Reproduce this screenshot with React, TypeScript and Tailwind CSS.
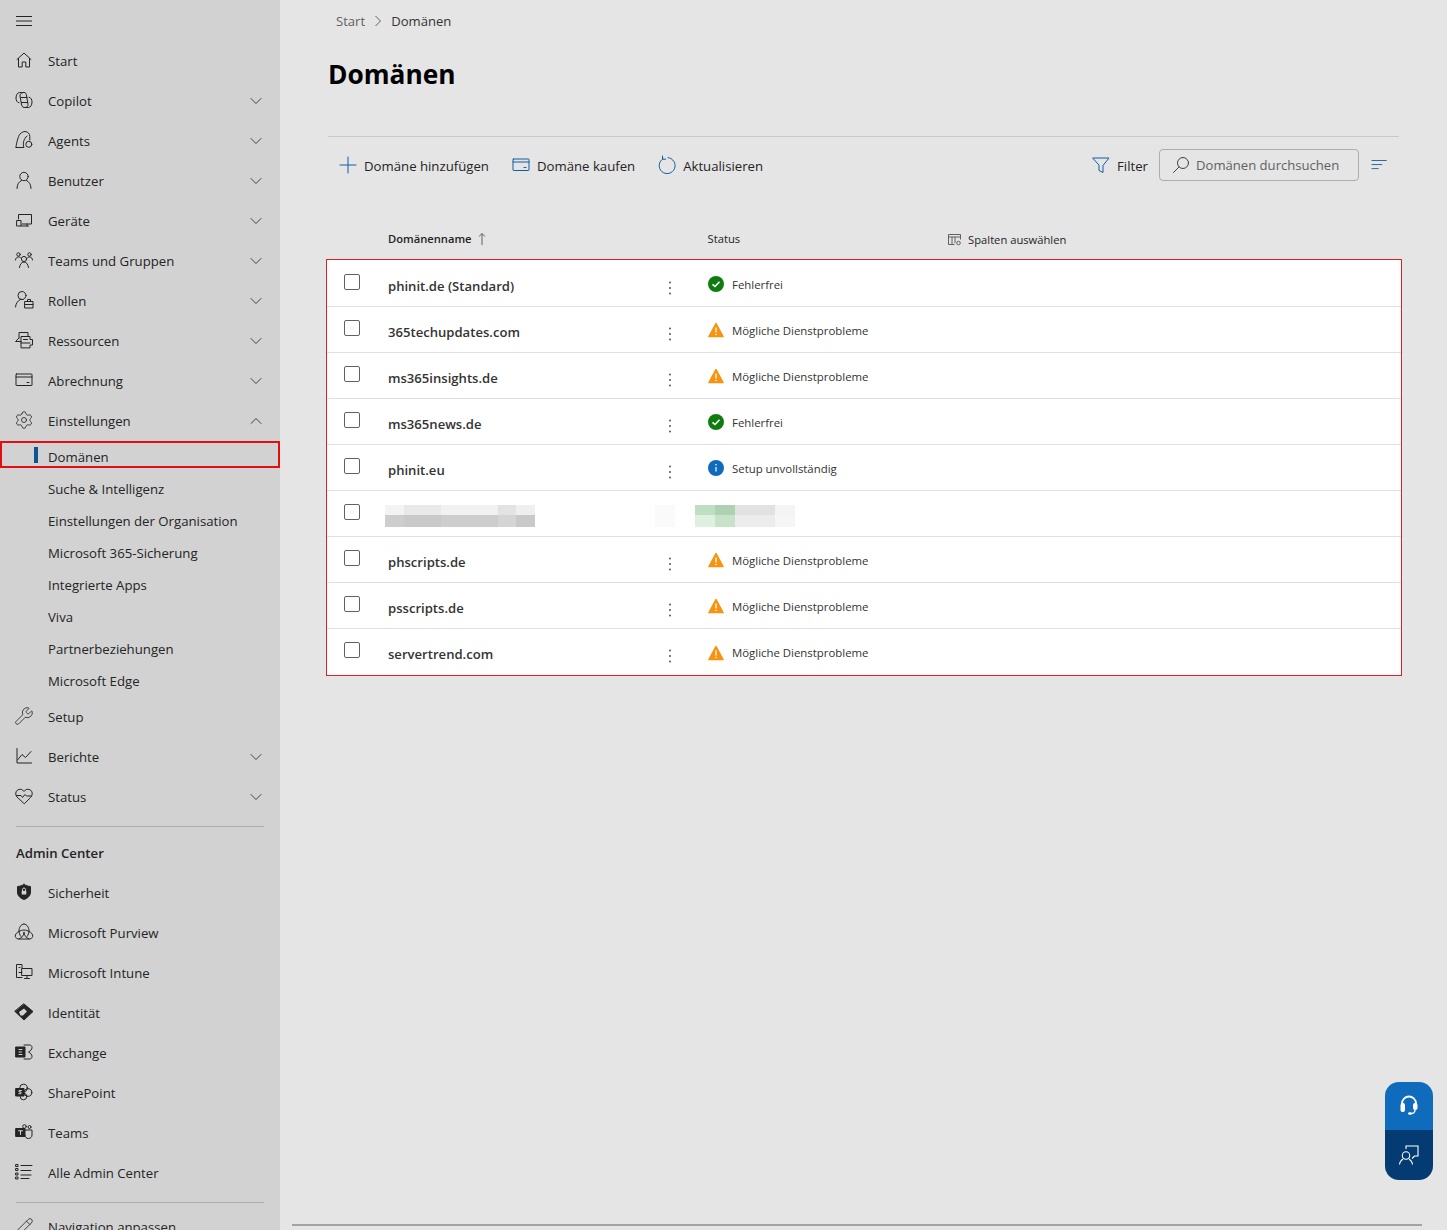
import type { ReactNode } from 'react';
import { ChevronDown, ChevronUp, Pencil, Settings, Wrench } from 'lucide-react';

const FONT = "[font-family:'Open_Sans','Noto_Sans',sans-serif]";

function Ico({ children, size = 20, fill = 'none' }: { children: ReactNode; size?: number; fill?: string }) {
  return (
    <svg width={size} height={size} viewBox="0 0 20 20" fill={fill} stroke="currentColor" strokeWidth={1} strokeLinecap="round" strokeLinejoin="round" className="shrink-0">
      {children}
    </svg>
  );
}

const HomeIcon = () => <Ico><path d="M3 9.5 10 3l7 6.5M4.500 8.300V17h3.700v-5h3.600v5h3.700V8.300" /></Ico>;
const CopilotIcon = () => <Ico><path d="M7.500 2.500H5.500C3.500 2.500 2 5 2 8c0 2.500 1 4.500 3 4.800" /><path d="M12.500 17.500h2c2 0 3.500-2.500 3.500-5.500 0-2.500-1-4.500-3-4.800" /><path d="M9 2.500c1.500-.5 3 .3 3.300 2l1.700 9.800c.3 1.900-1.300 3.300-3 3.200-1.300.1-3-.5-3.300-2.300L6 6c-.3-1.700 1.300-3.300 3-3.500Z" /><path d="M7 7.500h6M7.500 12.500h6" /></Ico>;
const AgentsIcon = () => <Ico><path d="M2 17.500c-.5-1 2-10 3-12C6 3.500 8.500 1.500 11 1.500c2.700 0 4.800 2 4.800 5v3.500M2 17.500h8c-1.500-3-.5-9 3-11.500" /><circle cx="14.800" cy="14.300" r="3" /></Ico>;
const UserIcon = () => <Ico><circle cx="10" cy="6.500" r="4.200" /><path d="M3 18.500c0-4 2-7 4.500-8M17 18.500c0-4-2-7-4.500-8" /></Ico>;
const DeviceIcon = () => <Ico><path d="M4.500 9V4.500h13v9.500H8M13 14v2" /><rect x="3" y="10.500" width="4" height="5.500" /><path d="M7 16h7.500" /></Ico>;
const GroupIcon = () => <Ico><circle cx="10" cy="9" r="2.600" /><path d="M5.500 17.500c.3-3 2-5.500 4.500-5.500s4.200 2.500 4.500 5.500" /><circle cx="4.500" cy="4.500" r="1.700" /><circle cx="15.500" cy="4.500" r="1.700" /><path d="M1.500 10c.2-2 1.300-3 3-3 1 0 1.700.3 2.300 1M18.500 10c-.2-2-1.300-3-3-3-1 0-1.700.3-2.300 1" /></Ico>;
const RolesIcon = () => <Ico><circle cx="8" cy="5.500" r="4" /><path d="M1.500 17c.2-3.500 2.500-6.500 5-7.500h2.500" /><rect x="11" y="11.500" width="8" height="6.500" /><path d="M13.500 11.500V9.500h3v2M11 14.500h8" /></Ico>;
const ResourcesIcon = () => <Ico><path d="M5 8V2.500h9V6M5 8 1.500 11.500H7" /><path d="M7 17.500V6.500h9v3h2.500v5.500H16v2.500Z" /><path d="M7 13h9M9.500 9.500h4" /></Ico>;
const BillingIcon = () => <Ico><rect x="2" y="4" width="16" height="11.500" rx=".5" /><path d="M2 7h16M13 12.500h2" /></Ico>;
const ChartIcon = () => <Ico><path d="M3 2.500V17h14.500M3.500 14 8 8.500l3.500 3L17 5.500" /></Ico>;
const HeartIcon = () => <Ico><path d="M10 17.500 3 11C1 8.800 1.500 5 4 3.800 6.500 2.600 8.800 3.500 10 5.500c1.200-2 3.500-2.900 6-1.700 2.500 1.200 3 5 1 7.200Z" /><path d="M2.500 9.500H7l1.500 2 2.500-3 1.500 1.500h5" /></Ico>;
const ShieldIcon = () => (
  <Ico fill="currentColor">
    <path d="M10 2.500c2 1.200 4 1.800 6.500 2V10c0 4-3 6.300-6.500 7.500C6.500 16.300 3.500 14 3.500 10V4.500c2.500-.2 4.500-.8 6.500-2Z" />
    <rect x="7.700" y="8.800" width="4.600" height="3.700" fill="#d2d2d2" stroke="none" />
    <path d="M8.500 8.800V7.500a1.500 1.500 0 0 1 3 0v1.300" stroke="#d2d2d2" fill="none" />
  </Ico>
);
const PurviewIcon = () => <Ico><path d="M10 2c3 0 5 3.500 5 7 0 2-.7 4-2 5.500" /><path d="M10 2C7 2 5 5.500 5 9c0 2 .7 4 2 5.500" /><path d="M5 9.500c-2.500 1-4 3-3.700 5 .3 1.800 2 2.500 3.700 2.500h10c1.700 0 3.400-.7 3.700-2.500.3-2-1.200-4-3.700-5" /><path d="M5 9.500c3-2 7-2 10 0M5 17c3-1 5-4 5-7 0 3 2 6 5 7" /></Ico>;
const IntuneIcon = () => <Ico><path d="M8 15.500H2.500v-13H8V6" /><path d="M5 10.500h3M5 5.500h1" /><rect x="8" y="6.500" width="10" height="7" /><path d="M13 13.500V16M10.500 16.500h5" /></Ico>;
const IdentityIcon = () => (
  <Ico fill="currentColor">
    <path d="M10 2 19 9.500 10 18 1 9.500Z" />
    <path d="M10 6.500 13 9.500 9 13.500H6.500L5 10Z" fill="#d2d2d2" stroke="none" />
  </Ico>
);
const ExchangeIcon = () => (
  <Ico>
    <path d="M10 3h5.500C17 3 18 4 18 5.500c0 2-1.500 3.500-3.500 4.500 2 1 3.500 2.500 3.500 4.500 0 1.500-1 2.500-2.500 2.500H10" />
    <rect x="2" y="5" width="9" height="10" fill="currentColor" />
    <path d="M5 7.500h3M5 10h2.500M5 12.500h3" stroke="#d2d2d2" />
  </Ico>
);
const SharePointIcon = () => (
  <Ico>
    <circle cx="9.500" cy="6" r="3.800" />
    <circle cx="14" cy="10.500" r="3.800" />
    <circle cx="9.500" cy="14.500" r="3.300" />
    <rect x="2" y="6.500" width="8" height="7.500" fill="currentColor" />
    <path d="M7.500 8.500H5v1.500h2v1.700H4.800" stroke="#d2d2d2" />
  </Ico>
);
const TeamsIcon = () => (
  <Ico>
    <circle cx="10.500" cy="4.500" r="1.800" />
    <circle cx="15.500" cy="5" r="1.500" />
    <path d="M9 8h9v5c0 2-1.500 3.500-3.500 3.500S11 15.500 11 13.500" />
    <rect x="2" y="6.500" width="9" height="8" fill="currentColor" />
    <path d="M4.500 8.800h4M6.500 8.800V12.500" stroke="#d2d2d2" />
  </Ico>
);
const ListIcon = () => (
  <Ico>
    <rect x="2" y="2.500" width="2" height="2" />
    <rect x="2" y="6.500" width="2" height="2" />
    <rect x="2" y="11" width="2" height="2" />
    <rect x="2" y="15" width="2" height="2" />
    <path d="M7 3.500h11M7 8.500h10M7 13h10M7 16.500h8" />
  </Ico>
);
const FilterIcon = () => <Ico size={20}><path d="M2 3h16L12 10.500v7l-4-2v-5Z" /></Ico>;
const SearchIcon = () => <Ico size={20}><circle cx="12" cy="8" r="5.500" /><path d="M8 12 2.500 17.500" /></Ico>;
const RefreshIcon = () => <Ico size={20}><path d="M6 3.700a8 8 0 1 0 5-1.100M5.500 1v3.200h3.200" /></Ico>;
const PlusIcon = () => <Ico size={20}><path d="M10 2v16M2 10h16" /></Ico>;
const SortIcon = () => <Ico size={18}><path d="M1 5h16M1 9.500h11M1 14h7" /></Ico>;
const ColumnsIcon = () => <svg width="14" height="14" viewBox="0 0 14 14" fill="none" stroke="currentColor" strokeWidth="1" className="shrink-0"><path d="M.5 1.500h12v5M.5 1.500v10h6M.5 4h12M4 4v7.500M7 4v6" /><circle cx="10.500" cy="10" r="1.800" /></svg>;

const OkIcon = () => (
  <svg width="16" height="16" viewBox="0 0 16 16" className="shrink-0 translate-y-px">
    <circle cx="8" cy="8" r="8" fill="#107c10" />
    <path d="M4.500 8.300 7 10.500l4.500-4.700" fill="none" stroke="#fff" strokeWidth="1.600" />
  </svg>
);
const WarnIcon = () => (
  <svg width="16" height="16" viewBox="0 0 16 16" className="shrink-0 translate-y-px">
    <path d="M8 .8c.3 0 .5.200.7.500l7 13c.3.600 0 1-.6 1H.9c-.6 0-.9-.4-.6-1l7-13c.2-.3.400-.5.700-.5Z" fill="#f7930e" />
    <path d="M8 5.500v5" stroke="#fff" strokeWidth="1.300" />
    <circle cx="8" cy="12.500" r=".8" fill="#fff" />
  </svg>
);
const InfoIcon = () => (
  <svg width="16" height="16" viewBox="0 0 16 16" className="shrink-0 translate-y-px">
    <circle cx="8" cy="8" r="8" fill="#0f6cbd" />
    <path d="M8 7v4.500" stroke="#fff" strokeWidth="1.200" />
    <circle cx="8" cy="4.800" r=".8" fill="#fff" />
  </svg>
);

type NavItem = { label: string; icon: ReactNode; chevron?: 'down' | 'up' };

const MAIN_NAV: NavItem[] = [
  { label: 'Start', icon: <HomeIcon /> },
  { label: 'Copilot', icon: <CopilotIcon />, chevron: 'down' },
  { label: 'Agents', icon: <AgentsIcon />, chevron: 'down' },
  { label: 'Benutzer', icon: <UserIcon />, chevron: 'down' },
  { label: 'Geräte', icon: <DeviceIcon />, chevron: 'down' },
  { label: 'Teams und Gruppen', icon: <GroupIcon />, chevron: 'down' },
  { label: 'Rollen', icon: <RolesIcon />, chevron: 'down' },
  { label: 'Ressourcen', icon: <ResourcesIcon />, chevron: 'down' },
  { label: 'Abrechnung', icon: <BillingIcon />, chevron: 'down' },
  { label: 'Einstellungen', icon: <Settings size={20} strokeWidth={1} />, chevron: 'up' },
];

const SUB_NAV = ['Suche & Intelligenz', 'Einstellungen der Organisation', 'Microsoft 365-Sicherung', 'Integrierte Apps', 'Viva', 'Partnerbeziehungen', 'Microsoft Edge'];

const LOWER_NAV: NavItem[] = [
  { label: 'Setup', icon: <Wrench size={20} strokeWidth={1} /> },
  { label: 'Berichte', icon: <ChartIcon />, chevron: 'down' },
  { label: 'Status', icon: <HeartIcon />, chevron: 'down' },
];

const ADMIN_NAV: NavItem[] = [
  { label: 'Sicherheit', icon: <ShieldIcon /> },
  { label: 'Microsoft Purview', icon: <PurviewIcon /> },
  { label: 'Microsoft Intune', icon: <IntuneIcon /> },
  { label: 'Identität', icon: <IdentityIcon /> },
  { label: 'Exchange', icon: <ExchangeIcon /> },
  { label: 'SharePoint', icon: <SharePointIcon /> },
  { label: 'Teams', icon: <TeamsIcon /> },
  { label: 'Alle Admin Center', icon: <ListIcon /> },
];

type Status = 'ok' | 'warn' | 'info';
const DOMAINS: { name: string; status?: Status }[] = [
  { name: 'phinit.de (Standard)', status: 'ok' },
  { name: '365techupdates.com', status: 'warn' },
  { name: 'ms365insights.de', status: 'warn' },
  { name: 'ms365news.de', status: 'ok' },
  { name: 'phinit.eu', status: 'info' },
  { name: '' },
  { name: 'phscripts.de', status: 'warn' },
  { name: 'psscripts.de', status: 'warn' },
  { name: 'servertrend.com', status: 'warn' },
];

const STATUS_TEXT: Record<Status, string> = { ok: 'Fehlerfrei', warn: 'Mögliche Dienstprobleme', info: 'Setup unvollständig' };
const STATUS_ICON: Record<Status, ReactNode> = { ok: <OkIcon />, warn: <WarnIcon />, info: <InfoIcon /> };

function NavRow({ item }: { item: NavItem }) {
  return (
    <div className="flex h-10 items-center pl-[14px] pr-[14px]">
      <span className="flex w-5 -translate-y-px justify-center text-[#242424]">{item.icon}</span>
      <span className="ml-[14px] flex-1 translate-y-px">{item.label}</span>
      {item.chevron === 'down' && <ChevronDown size={20} strokeWidth={1} className="text-[#242424]" />}
      {item.chevron === 'up' && <ChevronUp size={20} strokeWidth={1} className="text-[#242424]" />}
    </div>
  );
}

function Sidebar() {
  return (
    <aside className="relative h-full w-[280px] shrink-0 overflow-hidden bg-[#d2d2d2] text-[13.2px] text-[#242424]">
      <div className="flex h-[41px] items-center pl-4">
        <svg width="16" height="12" viewBox="0 0 16 12" fill="none" stroke="#242424" strokeWidth="1"><path d="M0 1.500h16M0 6h16M0 10.500h16" /></svg>
      </div>
      {MAIN_NAV.map(item => <NavRow key={item.label} item={item} />)}

      <div className="relative flex h-8 items-center pl-12">
        <span className="absolute left-[34px] top-[6px] h-[16px] w-1 bg-[#0f548c]" />
        <span className="translate-y-px">Domänen</span>
        <span className="absolute left-0 top-0 h-[27px] w-[280px] border-2 border-[#e01010]" />
      </div>
      {SUB_NAV.map(label => <div key={label} className="flex h-8 items-center pl-12"><span className="translate-y-px">{label}</span></div>)}

      {LOWER_NAV.map(item => <NavRow key={item.label} item={item} />)}

      <div className="mx-4 mt-[9px] h-px bg-[#adadad]" />
      <div className="flex h-[46px] items-center pl-4 pt-[8px] font-semibold">Admin Center</div>
      {ADMIN_NAV.map(item => <NavRow key={item.label} item={item} />)}

      <div className="mx-4 mt-[9px] h-px bg-[#adadad]" />
      <div className="flex h-10 items-center pl-[14px] pt-[7px]">
        <span className="flex w-5 justify-center"><Pencil size={20} strokeWidth={1} /></span>
        <span className="ml-[14px] translate-y-px">Navigation anpassen</span>
      </div>
    </aside>
  );
}

function Pixels({ colors, cell, h }: { colors: string[]; cell: string; h: string }) {
  return (
    <div className={`flex ${h}`}>
      {colors.map((c, i) => <span key={i} className={cell} style={{ backgroundColor: c }} />)}
    </div>
  );
}

function BlurredRow() {
  return (
    <>
      <div className="absolute left-[58px] top-[14px] w-[150px]">
        <Pixels h="h-[10px]" cell="w-[18.75px]" colors={['#f3f3f3', '#e9e9e9', '#e9e9e9', '#f1f1f1', '#f1f1f1', '#f1f1f1', '#e3e3e3', '#efefef']} />
        <Pixels h="h-[12px]" cell="w-[18.75px]" colors={['#cdcdcd', '#c9c9c9', '#c9c9c9', '#cdcdcd', '#cdcdcd', '#cdcdcd', '#d5d5d5', '#c9c9c9']} />
      </div>
      <div className="absolute left-[368px] top-[14px] w-[100px]">
        <Pixels h="h-[10px]" cell="w-5" colors={['#bfdfc3', '#add2b3', '#e2e2e2', '#e2e2e2', '#f4f4f4']} />
        <Pixels h="h-[12px]" cell="w-5" colors={['#dff0e0', '#c6e2c9', '#ececec', '#ececec', '#f6f6f6']} />
      </div>
      <span className="absolute left-[328px] top-[14px] h-[22px] w-5 bg-[#fafafa]" />
    </>
  );
}

function DomainRow({ name, status }: { name: string; status?: Status }) {
  return (
    <div className="relative flex h-[46px] items-center border-b border-[#e0e0e0] last:border-b-0">
      <span className="ml-[17px] h-4 w-4 -translate-y-[2px] rounded-[2px] border border-[#616161] bg-white" />
      {name ? (
        <>
          <span className="ml-[28px] w-[280px] translate-y-[3px] text-[13.1px] font-semibold text-[#333]">{name}</span>
          <svg width="4" height="16" viewBox="0 0 4 16" fill="#555" className="translate-y-[4px]">
            <circle cx="2" cy="2.500" r="1" />
            <circle cx="2" cy="8" r="1" />
            <circle cx="2" cy="13.500" r="1" />
          </svg>
          <span className="ml-[36px] flex items-center gap-2 text-[11.4px] text-[#333]">
            {status && STATUS_ICON[status]}
            <span className="translate-y-px">{status && STATUS_TEXT[status]}</span>
          </span>
        </>
      ) : <BlurredRow />}
    </div>
  );
}

function ToolbarButton({ icon, label, className }: { icon: ReactNode; label: string; className: string }) {
  return (
    <button className={`flex items-center gap-[6px] ${className}`}>
      <span className="text-[#115ea3]">{icon}</span>
      <span className="translate-y-[2px] text-[13.2px] text-[#242424]">{label}</span>
    </button>
  );
}

export default function App() {
  return (
    <div className={`relative flex h-[1230px] w-full overflow-hidden bg-[#e5e5e5] ${FONT}`}>
      <Sidebar />

      <main className="flex-1 pl-[46px] pr-[45px]">
        <div className="flex h-[42px] items-center gap-[6px] pl-[10px] text-[13.1px]">
          <span className="translate-y-px text-[#616161]">Start</span>
          <svg width="12" height="12" viewBox="0 0 12 12" fill="none" stroke="#616161" className="mx-[1px]"><path d="m3.500 1 5 5-5 5" /></svg>
          <span className="translate-y-px text-[#333]">Domänen</span>
        </div>
        <h1 className="flex h-[66px] items-center pl-[2px] text-[26.3px] font-bold text-black">Domänen</h1>

        <div className="ml-[2px] mr-[3px] mt-[28px] h-px bg-[#c8c8c8]" />

        <div className="flex h-[56px] items-center pl-[12px] pr-[13px]">
          <ToolbarButton icon={<PlusIcon />} label="Domäne hinzufügen" className="" />
          <ToolbarButton icon={<BillingIcon />} label="Domäne kaufen" className="ml-[22px]" />
          <ToolbarButton icon={<RefreshIcon />} label="Aktualisieren" className="ml-[22px]" />
          <ToolbarButton icon={<FilterIcon />} label="Filter" className="ml-auto" />
          <div className="ml-[11px] flex h-8 w-[200px] items-center gap-[5px] rounded-[4px] border border-[#adadad] pl-[11px] text-[13.1px] text-[#616161]">
            <span className="text-[#424242]"><SearchIcon /></span>
            <span className="translate-y-px">Domänen durchsuchen</span>
          </div>
          <span className="ml-3 text-[#115ea3]"><SortIcon /></span>
        </div>

        <div className="mt-[26px] flex h-10 items-center text-[11.2px] text-[#242424]">
          <span className="ml-[62px] font-semibold">Domänenname</span>
          <svg width="10" height="14" viewBox="0 0 10 14" fill="none" stroke="#616161" className="ml-[5px]"><path d="M5 13V1.500M2 4.500l3-3 3 3" /></svg>
          <span className="ml-[221px]">Status</span>
          <span className="ml-[208px] flex translate-y-px items-center gap-[6px]">
            <span className="text-[#616161]"><ColumnsIcon /></span>
            Spalten auswählen
          </span>
        </div>

        <div className="border border-[#e01f26] bg-white pt-px">
          {DOMAINS.map((d, i) => <DomainRow key={i} name={d.name} status={d.status} />)}
        </div>
      </main>

      <div className="absolute bottom-[4px] left-[292px] h-[2px] w-[1130px] bg-[#a3a3a3]" />

      <div className="absolute left-[1385px] top-[1082px] w-12 overflow-hidden rounded-[14px] text-white">
        <div className="flex h-12 items-center justify-center bg-[#0f6cbd]">
          <svg width="20" height="22" viewBox="0 0 20 22" fill="none" stroke="currentColor" strokeLinecap="round">
            <path d="M3 10V8.500a7 7 0 0 1 14 0V10" strokeWidth="1.800" />
            <rect x="1.500" y="8" width="4.500" height="9" rx="2" fill="currentColor" stroke="none" />
            <rect x="14" y="8" width="4.500" height="7" rx="2" fill="currentColor" stroke="none" />
            <path d="M16 15c0 2.500-1.500 3.500-4 3.500" strokeWidth="1.300" />
            <ellipse cx="11" cy="18.500" rx="2" ry="1.300" fill="currentColor" stroke="none" />
          </svg>
        </div>
        <div className="flex h-[50px] items-center justify-center bg-[#043b72]">
          <svg width="22" height="22" viewBox="0 0 22 22" fill="none" stroke="currentColor" strokeWidth="1.100">
            <path d="M8 5V2h12v10h-3.500l-2.500 2.500" />
            <circle cx="8" cy="11.500" r="3.700" />
            <path d="M1.500 20.500c.2-3 2-4.500 3.500-5.500M14.500 20.500c-.2-3-2-4.500-3.500-5.500" />
          </svg>
        </div>
      </div>
    </div>
  );
}
